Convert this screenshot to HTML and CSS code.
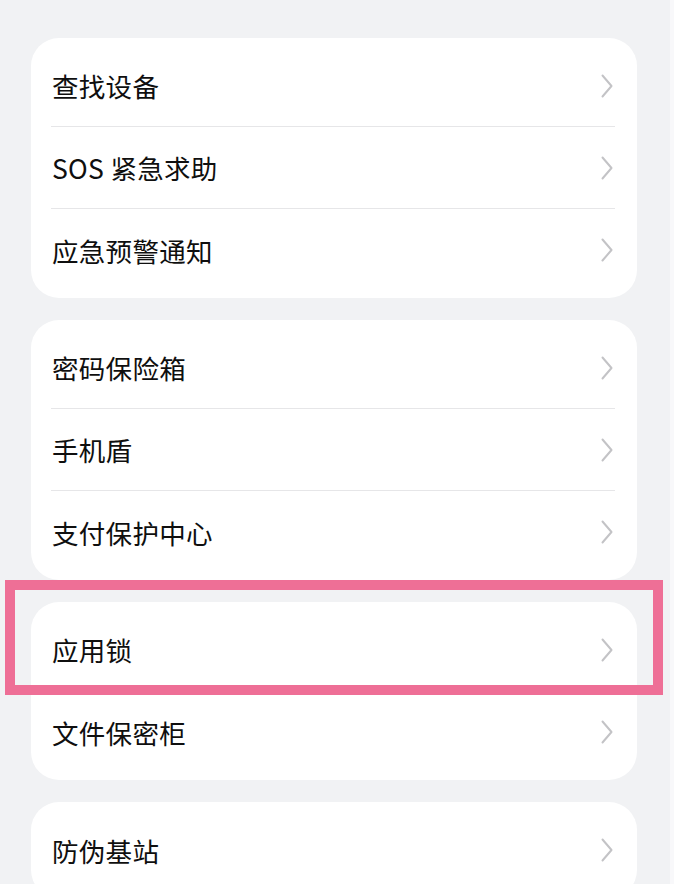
FILE: index.html
```html
<!DOCTYPE html>
<html lang="zh-CN">
<head>
<meta charset="utf-8">
<link rel="stylesheet" href="styles.css">
</head>
<body>
<div class="page">
  <section class="card">
    <div class="row"><span class="label">查找设备</span><svg class="chev" viewBox="0 0 12 24"><polyline points="1.5,1.5 10.5,12 1.5,22.5"/></svg></div>
    <div class="row"><span class="label">SOS 紧急求助</span><svg class="chev" viewBox="0 0 12 24"><polyline points="1.5,1.5 10.5,12 1.5,22.5"/></svg></div>
    <div class="row"><span class="label">应急预警通知</span><svg class="chev" viewBox="0 0 12 24"><polyline points="1.5,1.5 10.5,12 1.5,22.5"/></svg></div>
  </section>
  <section class="card">
    <div class="row"><span class="label">密码保险箱</span><svg class="chev" viewBox="0 0 12 24"><polyline points="1.5,1.5 10.5,12 1.5,22.5"/></svg></div>
    <div class="row"><span class="label">手机盾</span><svg class="chev" viewBox="0 0 12 24"><polyline points="1.5,1.5 10.5,12 1.5,22.5"/></svg></div>
    <div class="row"><span class="label">支付保护中心</span><svg class="chev" viewBox="0 0 12 24"><polyline points="1.5,1.5 10.5,12 1.5,22.5"/></svg></div>
  </section>
  <section class="card">
    <div class="row"><span class="label">应用锁</span><svg class="chev" viewBox="0 0 12 24"><polyline points="1.5,1.5 10.5,12 1.5,22.5"/></svg></div>
    <div class="row"><span class="label">文件保密柜</span><svg class="chev" viewBox="0 0 12 24"><polyline points="1.5,1.5 10.5,12 1.5,22.5"/></svg></div>
  </section>
  <section class="card">
    <div class="row"><span class="label">防伪基站</span><svg class="chev" viewBox="0 0 12 24"><polyline points="1.5,1.5 10.5,12 1.5,22.5"/></svg></div>
  </section>
</div>
<div class="highlight"></div>
<div class="edge"></div>
</body>
</html>
```
FILE: styles.css
```css
html, body {
  margin: 0;
  padding: 0;
  height: 100%;
  overflow: hidden;
}
body {
  background: #f1f2f4;
  font-family: "Noto Sans CJK SC", "Noto Sans", sans-serif;
  position: relative;
}
.page {
  padding: 38px 0 0 31px;
  width: 606px;
  display: flex;
  flex-direction: column;
  gap: 22px;
}
.card {
  background: #ffffff;
  border-radius: 28px;
  padding: 7px 0;
}
.row {
  height: 82px;
  margin: 0 22px 0 20px;
  display: flex;
  align-items: center;
  justify-content: space-between;
  border-bottom: 1.5px solid #e6e6e8;
  box-sizing: border-box;
}
.row:last-child {
  border-bottom: none;
}
.label {
  font-size: 26.5px;
  font-weight: 400;
  color: #0f0f0f;
  padding-left: 1px;
  letter-spacing: 0.3px;
}
.chev {
  width: 12px;
  height: 24px;
  margin-right: 2px;
  fill: none;
  stroke: #c3c3c6;
  stroke-width: 2;
  stroke-linecap: round;
  stroke-linejoin: round;
}
.highlight {
  position: absolute;
  left: 5px;
  top: 580px;
  width: 658px;
  height: 115px;
  box-sizing: border-box;
  border: 10px solid #ee6f96;
}
.edge {
  position: absolute;
  right: 0;
  top: 0;
  width: 4px;
  height: 100%;
  background: #f8f8fa;
}
```
